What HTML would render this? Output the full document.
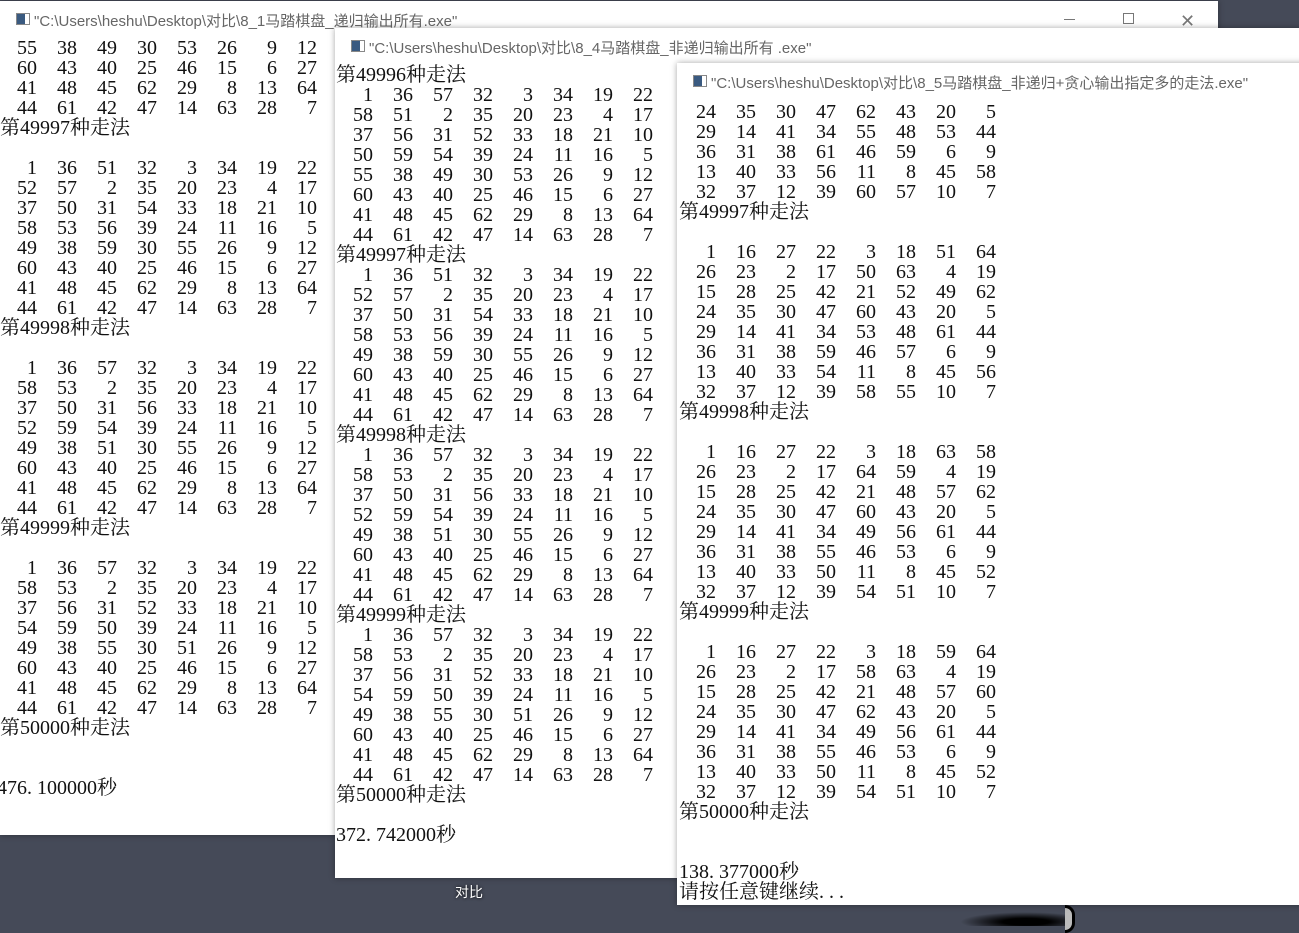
<!DOCTYPE html>
<html><head><meta charset="utf-8">
<style>
*{margin:0;padding:0;box-sizing:border-box}
body{width:1299px;height:933px;overflow:hidden;background:#454a58;position:relative;font-family:"Liberation Serif","Noto Serif CJK SC",serif}
.w{position:absolute;background:#fff;overflow:hidden;box-shadow:0 0 6px rgba(0,0,0,.35)}
.t{position:absolute;left:0;right:0;top:0;height:37px;font-family:"Liberation Sans","Noto Sans CJK SC",sans-serif;font-size:15px;color:#666;white-space:nowrap}
.t .ic{position:absolute;left:16px;top:12px;width:14px;height:12px;border:1px solid #888;background:linear-gradient(90deg,#3a5a80 0 8px,#fff 8px)}
.t span{position:absolute;left:34px;top:9px}
.c{position:absolute;left:0;font-size:20px;line-height:20px;color:#111;white-space:nowrap}
.r{height:20px;display:flex}
.r i{font-style:normal;width:40px;text-align:right;padding-right:3px;display:block}
.l{height:20px}
</style></head><body>

<div class="w" style="left:0;top:1px;width:1218px;height:834px">
<div class="t"><div class="ic"></div><span>"C:\Users\heshu\Desktop\对比\8_1马踏棋盘_递归输出所有.exe"</span>
<div style="position:absolute;left:1064px;top:18px;width:11px;height:1px;background:#777"></div>
<div style="position:absolute;left:1123px;top:12px;width:11px;height:11px;border:1px solid #777"></div>
<div style="position:absolute;left:1180px;top:10px;font-size:18px;color:#777">✕</div>
</div>
<div class="c" style="top:37px">
<div class="r"><i>55</i><i>38</i><i>49</i><i>30</i><i>53</i><i>26</i><i>9</i><i>12</i></div>
<div class="r"><i>60</i><i>43</i><i>40</i><i>25</i><i>46</i><i>15</i><i>6</i><i>27</i></div>
<div class="r"><i>41</i><i>48</i><i>45</i><i>62</i><i>29</i><i>8</i><i>13</i><i>64</i></div>
<div class="r"><i>44</i><i>61</i><i>42</i><i>47</i><i>14</i><i>63</i><i>28</i><i>7</i></div>
<div class="l">第49997种走法</div><div class="l"></div>
<div class="r"><i>1</i><i>36</i><i>51</i><i>32</i><i>3</i><i>34</i><i>19</i><i>22</i></div>
<div class="r"><i>52</i><i>57</i><i>2</i><i>35</i><i>20</i><i>23</i><i>4</i><i>17</i></div>
<div class="r"><i>37</i><i>50</i><i>31</i><i>54</i><i>33</i><i>18</i><i>21</i><i>10</i></div>
<div class="r"><i>58</i><i>53</i><i>56</i><i>39</i><i>24</i><i>11</i><i>16</i><i>5</i></div>
<div class="r"><i>49</i><i>38</i><i>59</i><i>30</i><i>55</i><i>26</i><i>9</i><i>12</i></div>
<div class="r"><i>60</i><i>43</i><i>40</i><i>25</i><i>46</i><i>15</i><i>6</i><i>27</i></div>
<div class="r"><i>41</i><i>48</i><i>45</i><i>62</i><i>29</i><i>8</i><i>13</i><i>64</i></div>
<div class="r"><i>44</i><i>61</i><i>42</i><i>47</i><i>14</i><i>63</i><i>28</i><i>7</i></div>
<div class="l">第49998种走法</div><div class="l"></div>
<div class="r"><i>1</i><i>36</i><i>57</i><i>32</i><i>3</i><i>34</i><i>19</i><i>22</i></div>
<div class="r"><i>58</i><i>53</i><i>2</i><i>35</i><i>20</i><i>23</i><i>4</i><i>17</i></div>
<div class="r"><i>37</i><i>50</i><i>31</i><i>56</i><i>33</i><i>18</i><i>21</i><i>10</i></div>
<div class="r"><i>52</i><i>59</i><i>54</i><i>39</i><i>24</i><i>11</i><i>16</i><i>5</i></div>
<div class="r"><i>49</i><i>38</i><i>51</i><i>30</i><i>55</i><i>26</i><i>9</i><i>12</i></div>
<div class="r"><i>60</i><i>43</i><i>40</i><i>25</i><i>46</i><i>15</i><i>6</i><i>27</i></div>
<div class="r"><i>41</i><i>48</i><i>45</i><i>62</i><i>29</i><i>8</i><i>13</i><i>64</i></div>
<div class="r"><i>44</i><i>61</i><i>42</i><i>47</i><i>14</i><i>63</i><i>28</i><i>7</i></div>
<div class="l">第49999种走法</div><div class="l"></div>
<div class="r"><i>1</i><i>36</i><i>57</i><i>32</i><i>3</i><i>34</i><i>19</i><i>22</i></div>
<div class="r"><i>58</i><i>53</i><i>2</i><i>35</i><i>20</i><i>23</i><i>4</i><i>17</i></div>
<div class="r"><i>37</i><i>56</i><i>31</i><i>52</i><i>33</i><i>18</i><i>21</i><i>10</i></div>
<div class="r"><i>54</i><i>59</i><i>50</i><i>39</i><i>24</i><i>11</i><i>16</i><i>5</i></div>
<div class="r"><i>49</i><i>38</i><i>55</i><i>30</i><i>51</i><i>26</i><i>9</i><i>12</i></div>
<div class="r"><i>60</i><i>43</i><i>40</i><i>25</i><i>46</i><i>15</i><i>6</i><i>27</i></div>
<div class="r"><i>41</i><i>48</i><i>45</i><i>62</i><i>29</i><i>8</i><i>13</i><i>64</i></div>
<div class="r"><i>44</i><i>61</i><i>42</i><i>47</i><i>14</i><i>63</i><i>28</i><i>7</i></div>
<div class="l">第50000种走法</div><div class="l"></div><div class="l"></div>
<div class="l" style="margin-left:-3px">476. 100000秒</div>
</div>
</div>

<div style="position:absolute;left:455px;top:882px;color:#fff;font-family:'Liberation Sans','Noto Sans CJK SC',sans-serif;font-size:14px;text-shadow:0 0 3px #000">对比</div>
<div style="position:absolute;left:960px;top:912px;width:110px;height:14px;background:radial-gradient(ellipse at 60% 70%,#000 25%,transparent 70%)"></div>
<div style="position:absolute;left:1065px;top:905px;width:10px;height:28px;border:3px solid #000;border-left:none;border-radius:0 10px 10px 0;background:#bbb"></div>

<div class="w" style="left:335px;top:28px;width:1000px;height:850px">
<div class="t"><div class="ic"></div><span>"C:\Users\heshu\Desktop\对比\8_4马踏棋盘_非递归输出所有&nbsp;.exe"</span></div>
<div class="c" style="top:37px;left:1px">
<div class="l">第49996种走法</div>
<div class="r"><i>1</i><i>36</i><i>57</i><i>32</i><i>3</i><i>34</i><i>19</i><i>22</i></div>
<div class="r"><i>58</i><i>51</i><i>2</i><i>35</i><i>20</i><i>23</i><i>4</i><i>17</i></div>
<div class="r"><i>37</i><i>56</i><i>31</i><i>52</i><i>33</i><i>18</i><i>21</i><i>10</i></div>
<div class="r"><i>50</i><i>59</i><i>54</i><i>39</i><i>24</i><i>11</i><i>16</i><i>5</i></div>
<div class="r"><i>55</i><i>38</i><i>49</i><i>30</i><i>53</i><i>26</i><i>9</i><i>12</i></div>
<div class="r"><i>60</i><i>43</i><i>40</i><i>25</i><i>46</i><i>15</i><i>6</i><i>27</i></div>
<div class="r"><i>41</i><i>48</i><i>45</i><i>62</i><i>29</i><i>8</i><i>13</i><i>64</i></div>
<div class="r"><i>44</i><i>61</i><i>42</i><i>47</i><i>14</i><i>63</i><i>28</i><i>7</i></div>
<div class="l">第49997种走法</div>
<div class="r"><i>1</i><i>36</i><i>51</i><i>32</i><i>3</i><i>34</i><i>19</i><i>22</i></div>
<div class="r"><i>52</i><i>57</i><i>2</i><i>35</i><i>20</i><i>23</i><i>4</i><i>17</i></div>
<div class="r"><i>37</i><i>50</i><i>31</i><i>54</i><i>33</i><i>18</i><i>21</i><i>10</i></div>
<div class="r"><i>58</i><i>53</i><i>56</i><i>39</i><i>24</i><i>11</i><i>16</i><i>5</i></div>
<div class="r"><i>49</i><i>38</i><i>59</i><i>30</i><i>55</i><i>26</i><i>9</i><i>12</i></div>
<div class="r"><i>60</i><i>43</i><i>40</i><i>25</i><i>46</i><i>15</i><i>6</i><i>27</i></div>
<div class="r"><i>41</i><i>48</i><i>45</i><i>62</i><i>29</i><i>8</i><i>13</i><i>64</i></div>
<div class="r"><i>44</i><i>61</i><i>42</i><i>47</i><i>14</i><i>63</i><i>28</i><i>7</i></div>
<div class="l">第49998种走法</div>
<div class="r"><i>1</i><i>36</i><i>57</i><i>32</i><i>3</i><i>34</i><i>19</i><i>22</i></div>
<div class="r"><i>58</i><i>53</i><i>2</i><i>35</i><i>20</i><i>23</i><i>4</i><i>17</i></div>
<div class="r"><i>37</i><i>50</i><i>31</i><i>56</i><i>33</i><i>18</i><i>21</i><i>10</i></div>
<div class="r"><i>52</i><i>59</i><i>54</i><i>39</i><i>24</i><i>11</i><i>16</i><i>5</i></div>
<div class="r"><i>49</i><i>38</i><i>51</i><i>30</i><i>55</i><i>26</i><i>9</i><i>12</i></div>
<div class="r"><i>60</i><i>43</i><i>40</i><i>25</i><i>46</i><i>15</i><i>6</i><i>27</i></div>
<div class="r"><i>41</i><i>48</i><i>45</i><i>62</i><i>29</i><i>8</i><i>13</i><i>64</i></div>
<div class="r"><i>44</i><i>61</i><i>42</i><i>47</i><i>14</i><i>63</i><i>28</i><i>7</i></div>
<div class="l">第49999种走法</div>
<div class="r"><i>1</i><i>36</i><i>57</i><i>32</i><i>3</i><i>34</i><i>19</i><i>22</i></div>
<div class="r"><i>58</i><i>53</i><i>2</i><i>35</i><i>20</i><i>23</i><i>4</i><i>17</i></div>
<div class="r"><i>37</i><i>56</i><i>31</i><i>52</i><i>33</i><i>18</i><i>21</i><i>10</i></div>
<div class="r"><i>54</i><i>59</i><i>50</i><i>39</i><i>24</i><i>11</i><i>16</i><i>5</i></div>
<div class="r"><i>49</i><i>38</i><i>55</i><i>30</i><i>51</i><i>26</i><i>9</i><i>12</i></div>
<div class="r"><i>60</i><i>43</i><i>40</i><i>25</i><i>46</i><i>15</i><i>6</i><i>27</i></div>
<div class="r"><i>41</i><i>48</i><i>45</i><i>62</i><i>29</i><i>8</i><i>13</i><i>64</i></div>
<div class="r"><i>44</i><i>61</i><i>42</i><i>47</i><i>14</i><i>63</i><i>28</i><i>7</i></div>
<div class="l">第50000种走法</div><div class="l"></div>
<div class="l">372. 742000秒</div>
</div>
</div>

<div class="w" style="left:677px;top:63px;width:640px;height:842px">
<div class="t"><div class="ic"></div><span>"C:\Users\heshu\Desktop\对比\8_5马踏棋盘_非递归+贪心输出指定多的走法.exe"</span></div>
<div class="c" style="top:39px;left:2px">
<div class="r"><i>24</i><i>35</i><i>30</i><i>47</i><i>62</i><i>43</i><i>20</i><i>5</i></div>
<div class="r"><i>29</i><i>14</i><i>41</i><i>34</i><i>55</i><i>48</i><i>53</i><i>44</i></div>
<div class="r"><i>36</i><i>31</i><i>38</i><i>61</i><i>46</i><i>59</i><i>6</i><i>9</i></div>
<div class="r"><i>13</i><i>40</i><i>33</i><i>56</i><i>11</i><i>8</i><i>45</i><i>58</i></div>
<div class="r"><i>32</i><i>37</i><i>12</i><i>39</i><i>60</i><i>57</i><i>10</i><i>7</i></div>
<div class="l">第49997种走法</div><div class="l"></div>
<div class="r"><i>1</i><i>16</i><i>27</i><i>22</i><i>3</i><i>18</i><i>51</i><i>64</i></div>
<div class="r"><i>26</i><i>23</i><i>2</i><i>17</i><i>50</i><i>63</i><i>4</i><i>19</i></div>
<div class="r"><i>15</i><i>28</i><i>25</i><i>42</i><i>21</i><i>52</i><i>49</i><i>62</i></div>
<div class="r"><i>24</i><i>35</i><i>30</i><i>47</i><i>60</i><i>43</i><i>20</i><i>5</i></div>
<div class="r"><i>29</i><i>14</i><i>41</i><i>34</i><i>53</i><i>48</i><i>61</i><i>44</i></div>
<div class="r"><i>36</i><i>31</i><i>38</i><i>59</i><i>46</i><i>57</i><i>6</i><i>9</i></div>
<div class="r"><i>13</i><i>40</i><i>33</i><i>54</i><i>11</i><i>8</i><i>45</i><i>56</i></div>
<div class="r"><i>32</i><i>37</i><i>12</i><i>39</i><i>58</i><i>55</i><i>10</i><i>7</i></div>
<div class="l">第49998种走法</div><div class="l"></div>
<div class="r"><i>1</i><i>16</i><i>27</i><i>22</i><i>3</i><i>18</i><i>63</i><i>58</i></div>
<div class="r"><i>26</i><i>23</i><i>2</i><i>17</i><i>64</i><i>59</i><i>4</i><i>19</i></div>
<div class="r"><i>15</i><i>28</i><i>25</i><i>42</i><i>21</i><i>48</i><i>57</i><i>62</i></div>
<div class="r"><i>24</i><i>35</i><i>30</i><i>47</i><i>60</i><i>43</i><i>20</i><i>5</i></div>
<div class="r"><i>29</i><i>14</i><i>41</i><i>34</i><i>49</i><i>56</i><i>61</i><i>44</i></div>
<div class="r"><i>36</i><i>31</i><i>38</i><i>55</i><i>46</i><i>53</i><i>6</i><i>9</i></div>
<div class="r"><i>13</i><i>40</i><i>33</i><i>50</i><i>11</i><i>8</i><i>45</i><i>52</i></div>
<div class="r"><i>32</i><i>37</i><i>12</i><i>39</i><i>54</i><i>51</i><i>10</i><i>7</i></div>
<div class="l">第49999种走法</div><div class="l"></div>
<div class="r"><i>1</i><i>16</i><i>27</i><i>22</i><i>3</i><i>18</i><i>59</i><i>64</i></div>
<div class="r"><i>26</i><i>23</i><i>2</i><i>17</i><i>58</i><i>63</i><i>4</i><i>19</i></div>
<div class="r"><i>15</i><i>28</i><i>25</i><i>42</i><i>21</i><i>48</i><i>57</i><i>60</i></div>
<div class="r"><i>24</i><i>35</i><i>30</i><i>47</i><i>62</i><i>43</i><i>20</i><i>5</i></div>
<div class="r"><i>29</i><i>14</i><i>41</i><i>34</i><i>49</i><i>56</i><i>61</i><i>44</i></div>
<div class="r"><i>36</i><i>31</i><i>38</i><i>55</i><i>46</i><i>53</i><i>6</i><i>9</i></div>
<div class="r"><i>13</i><i>40</i><i>33</i><i>50</i><i>11</i><i>8</i><i>45</i><i>52</i></div>
<div class="r"><i>32</i><i>37</i><i>12</i><i>39</i><i>54</i><i>51</i><i>10</i><i>7</i></div>
<div class="l">第50000种走法</div><div class="l"></div><div class="l"></div>
<div class="l">138. 377000秒</div>
<div class="l">请按任意键继续. . .</div>
</div>
</div>
</body></html>
